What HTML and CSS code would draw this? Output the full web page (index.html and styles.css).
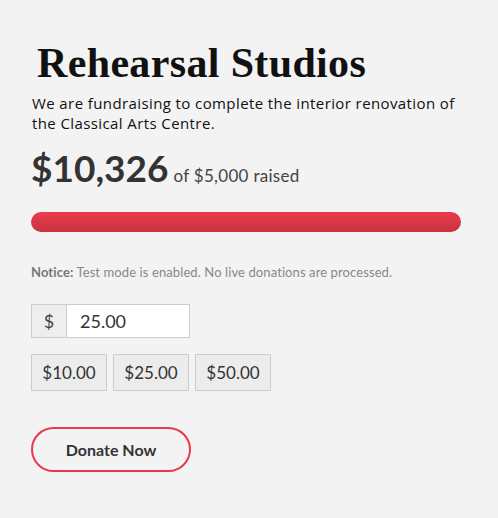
FILE: index.html
```html
<!DOCTYPE html>
<html>
<head>
<meta charset="utf-8">
<link rel="stylesheet" href="styles.css">
</head>
<body>
<div class="form">
  <h1 class="title">Rehearsal Studios</h1>
  <p class="desc">We are fundraising to complete the interior renovation of the Classical Arts Centre.</p>
  <div class="goal"><span class="raised">$10,326</span><span class="of">of $5,000 raised</span></div>
  <div class="bar"></div>
  <p class="notice"><b>Notice:</b> Test mode is enabled. No live donations are processed.</p>
  <div class="amount">
    <span class="cur">$</span>
    <span class="val">25.00</span>
  </div>
  <div class="levels">
    <button class="lvl">$10.00</button>
    <button class="lvl">$25.00</button>
    <button class="lvl">$50.00</button>
  </div>
  <button class="donate">Donate Now</button>
</div>
</body>
</html>
```
FILE: styles.css
```css
html, body { margin: 0; background: #f3f3f3; }
body { width: 498px; height: 518px; overflow: hidden; }
.form { padding: 37px 0 0 31px; font-family: "Lato", "Liberation Sans", sans-serif; color: #333; }
.title { margin: 0 0 0 6px; font-family: "Liberation Serif", serif; font-size: 42px; font-weight: bold; color: #111; line-height: 52px; letter-spacing: 0.35px; }
.desc { margin: 4px 0 0 1px; font-family: "Open Sans", sans-serif; font-size: 15px; letter-spacing: 0.4px; line-height: 20px; color: #111; width: 430px; }
.goal { margin-top: 10px; display: flex; align-items: baseline; gap: 5px; }
.raised { font-size: 37px; font-weight: bold; color: #333; line-height: 50px; }
.of { font-size: 17px; letter-spacing: 0.3px; color: #444; }
.bar { margin-top: 19px; width: 430px; height: 20px; border-radius: 10px; background: linear-gradient(#ea3c4c, #c9323f); }
.notice { margin: 32px 0 0; font-size: 13px; letter-spacing: 0.1px; color: #888; }
.notice b { color: #777; }
.amount { margin-top: 24px; display: flex; width: 159px; height: 34px; box-sizing: border-box; border: 1px solid #ccc; background: #fff; }
.cur { width: 34px; background: #eee; border-right: 1px solid #ccc; display: flex; align-items: center; justify-content: center; font-size: 18px; color: #444; }
.val { display: flex; align-items: center; padding-left: 13px; font-size: 18px; color: #333; }
.levels { margin-top: 16px; display: flex; gap: 6px; }
.lvl { height: 37px; box-sizing: border-box; border: 1px solid #ccc; background: #ececec; font-family: "Lato", sans-serif; font-size: 17px; color: #333; padding: 0 9px; width: 76px; }
.donate { display: block; margin-top: 36px; width: 160px; height: 45px; border: 2px solid #e83a4a; border-radius: 23px; background: transparent; font-family: "Lato", sans-serif; font-weight: bold; font-size: 16px; color: #333; }
```
